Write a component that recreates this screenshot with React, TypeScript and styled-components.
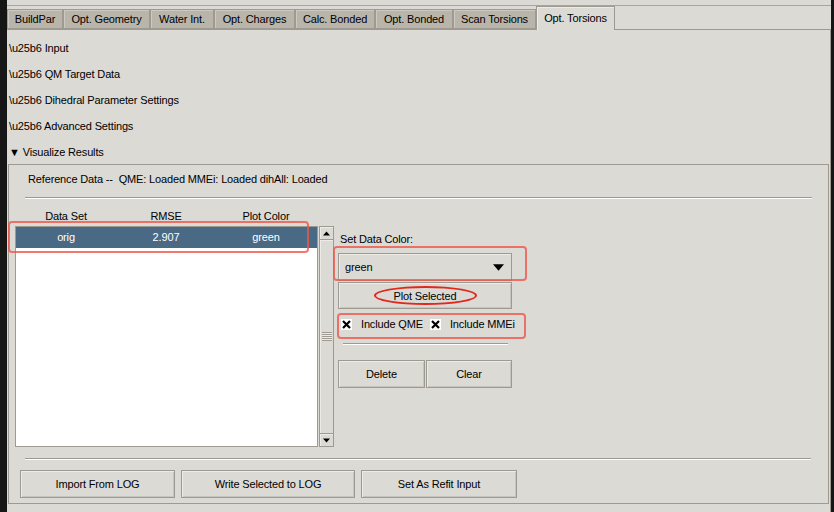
import React from 'react';
import styled, { createGlobalStyle } from 'styled-components';

const GlobalStyle = createGlobalStyle`
  html, body {
    margin: 0;
    padding: 0;
    background: #161616;
  }
  body {
    font-family: "Liberation Sans", Arial, sans-serif;
    font-size: 11px;
    letter-spacing: -0.15px;
    color: #000;
  }
`;

const Screen = styled.div`
  display: flex;
  width: 834px;
  height: 512px;
  overflow: hidden;
  background: #161616;
`;

const Window = styled.div`
  margin-left: 7px;
  width: 824px;
  height: 512px;
  background: #dcdad5;
  display: flex;
  flex-direction: column;
`;

const TopEdge = styled.div`
  height: 5px;
  border-bottom: 1px solid #a9a59d;
`;

const TabBar = styled.div`
  display: flex;
  align-items: flex-end;
  height: 23px;
  border-bottom: 1px solid #9e9a91;
`;

const Tab = styled.div<{ $w: number; $active?: boolean }>`
  box-sizing: border-box;
  width: ${p => p.$w}px;
  height: ${p => (p.$active ? 24 : 20)}px;
  margin-bottom: ${p => (p.$active ? -1 : 0)}px;
  background: ${p => (p.$active ? '#dcdad5' : '#bab5ab')};
  border: 1px solid #9e9a91;
  border-bottom: ${p => (p.$active ? 'none' : '1px solid #9e9a91')};
  box-shadow: inset 1px 1px 0 ${p => (p.$active ? '#eeebe7' : '#cdc9c1')};
  display: flex;
  align-items: center;
  justify-content: center;
  padding-bottom: ${p => (p.$active ? 2 : 0)}px;
  white-space: nowrap;
`;

const Pane = styled.div`
  flex: 1;
  display: flex;
  flex-direction: column;
  border-right: 1px solid #9e9a91;
  padding-top: 5px;
`;

const SectionRow = styled.div<{ $h?: number }>`
  height: ${p => p.$h ?? 26}px;
  line-height: 26px;
  padding-left: 2px;
  white-space: nowrap;
`;

const Panel = styled.div`
  box-sizing: border-box;
  margin: 0 1px 0 1px;
  height: 340px;
  border: 1px solid #9e9a91;
  display: flex;
  flex-direction: column;
`;

const RefLabel = styled.div`
  padding: 7px 0 0 19px;
  line-height: 14px;
  white-space: pre;
`;

const Separator = styled.div<{ $ml: number; $mr: number; $mt: number }>`
  height: 0;
  margin: ${p => p.$mt}px ${p => p.$mr}px 0 ${p => p.$ml}px;
  border-top: 1px solid #9e9a91;
  border-bottom: 1px solid #ffffff;
`;

const Body = styled.div`
  display: flex;
  margin-top: 10px;
  padding-left: 6px;
`;

const ListArea = styled.div`
  position: relative;
  display: flex;
  flex-direction: column;
`;

const HeaderRow = styled.div`
  display: flex;
  height: 14px;
  line-height: 14px;
  padding-left: 1px;
`;

const Col = styled.div`
  width: 100px;
  text-align: center;
  white-space: nowrap;
`;

const ListWrap = styled.div`
  display: flex;
  margin-top: 3px;
`;

const ListBox = styled.div`
  box-sizing: border-box;
  width: 303px;
  height: 221px;
  background: #ffffff;
  border: 1px solid #9e9a91;
`;

const ListRow = styled.div<{ $selected?: boolean }>`
  display: flex;
  height: 21px;
  line-height: 21px;
  background: ${p => (p.$selected ? '#4a6984' : 'transparent')};
  color: ${p => (p.$selected ? '#ffffff' : '#000')};
`;

const Scrollbar = styled.div`
  box-sizing: border-box;
  margin-left: 1px;
  width: 15px;
  height: 221px;
  display: flex;
  flex-direction: column;
  background: #dcdad5;
  border: 1px solid #9e9a91;
`;

const ScrollButton = styled.div`
  box-sizing: border-box;
  height: 13px;
  display: flex;
  align-items: center;
  justify-content: center;
  border-bottom: 1px solid #9e9a91;
  box-shadow: inset 1px 1px 0 #eeebe7;
  &:last-child {
    border-bottom: none;
    border-top: 1px solid #9e9a91;
  }
`;

const Thumb = styled.div`
  flex: 1;
  display: flex;
  align-items: center;
  justify-content: center;
  box-shadow: inset 1px 1px 0 #eeebe7;
`;

const Grip = styled.div`
  width: 10px;
  height: 9px;
  background: repeating-linear-gradient(
    to bottom,
    #9e9a91 0px,
    #9e9a91 1px,
    #eeebe7 1px,
    #eeebe7 2px
  );
`;

const RightCol = styled.div`
  position: relative;
  margin-left: 4px;
  width: 174px;
  display: flex;
  flex-direction: column;
  padding-top: 23px;
`;

const FieldLabel = styled.div`
  padding-left: 2px;
  line-height: 14px;
`;

const Combo = styled.div`
  box-sizing: border-box;
  margin-top: 7px;
  height: 28px;
  border: 1px solid #9e9a91;
  box-shadow: inset 1px 1px 0 #eeebe7;
  display: flex;
  align-items: center;
  justify-content: space-between;
  padding: 0 7px 0 6px;
`;

const Button = styled.div<{ $w?: number }>`
  position: relative;
  box-sizing: border-box;
  width: ${p => (p.$w ? `${p.$w}px` : 'auto')};
  height: 28px;
  border: 1px solid #9e9a91;
  box-shadow: inset 1px 1px 0 #eeebe7, inset -1px -1px 0 #c9c5bd;
  display: flex;
  align-items: center;
  justify-content: center;
  white-space: nowrap;
`;

const PlotButton = styled(Button)`
  margin-top: 1px;
  height: 27px;
`;

const CheckRow = styled.div`
  margin-top: 5px;
  height: 20px;
  display: flex;
  align-items: center;
  padding-left: 3px;
`;

const CheckItem = styled.label`
  display: flex;
  align-items: center;
  gap: 9px;
  margin-right: 7px;
  white-space: nowrap;
  flex-shrink: 0;
  svg {
    flex-shrink: 0;
  }
`;

const ButtonPair = styled.div`
  display: flex;
  gap: 1px;
  margin-top: 15px;
`;

const BottomButtons = styled.div`
  display: flex;
  gap: 6px;
  margin-top: 10px;
  padding-left: 11px;
`;

const Annotation = styled.div<{ $l: number; $t: number; $w: number; $h: number }>`
  position: absolute;
  box-sizing: border-box;
  left: ${p => p.$l}px;
  top: ${p => p.$t}px;
  width: ${p => p.$w}px;
  height: ${p => p.$h}px;
  border: 2px solid rgba(236, 86, 76, 0.8);
  border-radius: 4px;
  pointer-events: none;
`;

const Ellipse = styled.div`
  position: absolute;
  box-sizing: border-box;
  left: 35px;
  top: 3px;
  width: 103px;
  height: 19px;
  border: 2px solid #e2271d;
  border-radius: 50%;
  pointer-events: none;
`;

const tabs = [
  { label: 'BuildPar', w: 56 },
  { label: 'Opt. Geometry', w: 87 },
  { label: 'Water Int.', w: 64 },
  { label: 'Opt. Charges', w: 81 },
  { label: 'Calc. Bonded', w: 80 },
  { label: 'Opt. Bonded', w: 78 },
  { label: 'Scan Torsions', w: 83 },
  { label: 'Opt. Torsions', w: 79 },
];

const sections = ['Input', 'QM Target Data', 'Dihedral Parameter Settings', 'Advanced Settings'];

const CheckBox: React.FC = () => (
  <svg width="11" height="11" viewBox="0 0 11 11">
    <rect x="0" y="0" width="11" height="11" fill="#ffffff" />
    <path d="M2 2 L9 9 M9 2 L2 9" stroke="#000" strokeWidth="2.2" />
  </svg>
);

const Arrow: React.FC<{ dir: 'up' | 'down'; size?: number }> = ({ dir, size = 7 }) => (
  <svg width={size} height={Math.ceil(size / 2) + 1} viewBox="0 0 10 6">
    {dir === 'up' ? <polygon points="0,6 10,6 5,0" fill="#000" /> : <polygon points="0,0 10,0 5,6" fill="#000" />}
  </svg>
);

const App: React.FC = () => {
  return (
    <Screen>
      <GlobalStyle />
      <Window>
        <TopEdge />
        <TabBar>
          {tabs.map(t => (
            <Tab key={t.label} $w={t.w} $active={t.label === 'Opt. Torsions'}>
              {t.label}
            </Tab>
          ))}
        </TabBar>
        <Pane>
          {sections.map(s => (
            <SectionRow key={s}>{'\\u25b6 ' + s}</SectionRow>
          ))}
          <SectionRow $h={25}>▼ Visualize Results</SectionRow>
          <Panel>
            <RefLabel>Reference Data --  QME: Loaded MMEi: Loaded dihAll: Loaded</RefLabel>
            <Separator $mt={11} $ml={16} $mr={16} />
            <Body>
              <ListArea>
                <HeaderRow>
                  <Col>Data Set</Col>
                  <Col>RMSE</Col>
                  <Col>Plot Color</Col>
                </HeaderRow>
                <ListWrap>
                  <ListBox>
                    <ListRow $selected>
                      <Col>orig</Col>
                      <Col>2.907</Col>
                      <Col>green</Col>
                    </ListRow>
                  </ListBox>
                  <Scrollbar>
                    <ScrollButton>
                      <Arrow dir="up" />
                    </ScrollButton>
                    <Thumb>
                      <Grip />
                    </Thumb>
                    <ScrollButton>
                      <Arrow dir="down" />
                    </ScrollButton>
                  </Scrollbar>
                </ListWrap>
                <Annotation $l={-7} $t={12} $w={301} $h={32} />
              </ListArea>
              <RightCol>
                <FieldLabel>Set Data Color:</FieldLabel>
                <Combo>
                  <span>green</span>
                  <Arrow dir="down" size={11} />
                </Combo>
                <PlotButton>
                  Plot Selected
                  <Ellipse />
                </PlotButton>
                <CheckRow>
                  <CheckItem>
                    <CheckBox />
                    Include QME
                  </CheckItem>
                  <CheckItem>
                    <CheckBox />
                    Include MMEi
                  </CheckItem>
                </CheckRow>
                <Separator $mt={9} $ml={5} $mr={4} />
                <ButtonPair>
                  <Button $w={87}>Delete</Button>
                  <Button $w={86}>Clear</Button>
                </ButtonPair>
                <Annotation $l={-5} $t={37} $w={194} $h={35} />
                <Annotation $l={-1} $t={104} $w={189} $h={26} />
              </RightCol>
            </Body>
            <Separator $mt={11} $ml={16} $mr={17} />
            <BottomButtons>
              <Button $w={155}>Import From LOG</Button>
              <Button $w={174}>Write Selected to LOG</Button>
              <Button $w={156}>Set As Refit Input</Button>
            </BottomButtons>
          </Panel>
        </Pane>
      </Window>
    </Screen>
  );
};

export default App;
